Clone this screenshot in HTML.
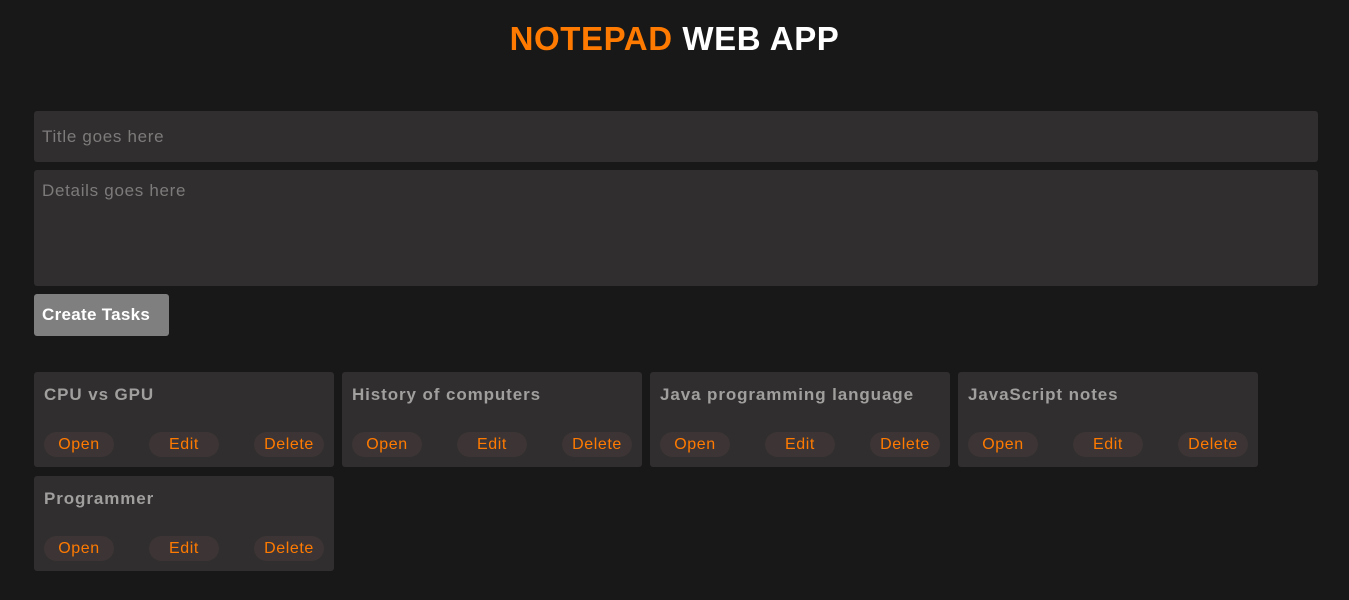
<!DOCTYPE html>
<html><head><style>
body{margin:0;background:#181818;font-family:"Liberation Sans",sans-serif;width:1349px;height:600px;overflow:hidden;position:relative}
h1{position:absolute;top:20px;left:0;width:100%;text-align:center;margin:0;font-size:33px;font-weight:bold;color:#fff;letter-spacing:0.6px}
h1 span{color:#ff7a00}
.in{position:absolute;left:34px;width:1284px;background:#302e2e;border-radius:3px;color:#7d7a7a;font-size:17px;box-sizing:border-box;padding-left:8px;letter-spacing:0.7px}
.btn{position:absolute;left:34px;top:294px;width:135px;height:42px;background:#7f7f7f;border-radius:3px;color:#fff;font-weight:bold;font-size:17px;line-height:42px;padding-left:8px;box-sizing:border-box;letter-spacing:0.3px}
.card{position:absolute;width:300px;height:95px;background:#302e2e;border-radius:3px}
.card b{position:absolute;left:10px;top:13px;color:#a19e9e;font-size:17px;letter-spacing:0.9px}
.p{position:absolute;top:60px;width:70px;height:25px;border-radius:13px;background:#3d3535;color:#ff7a00;font-size:16px;line-height:25px;text-align:center;letter-spacing:0.6px}
</style></head><body>
<h1><span>NOTEPAD</span> WEB APP</h1>
<div class="in" style="top:111px;height:51px;line-height:51px">Title goes here</div>
<div class="in" style="top:170px;height:116px;padding-top:11px">Details goes here</div>
<div class="btn">Create Tasks</div>
<div class="card" style="left:34px;top:372px"><b>CPU vs GPU</b><div class="p" style="left:10px">Open</div><div class="p" style="left:115px">Edit</div><div class="p" style="left:220px">Delete</div></div>
<div class="card" style="left:342px;top:372px"><b>History of computers</b><div class="p" style="left:10px">Open</div><div class="p" style="left:115px">Edit</div><div class="p" style="left:220px">Delete</div></div>
<div class="card" style="left:650px;top:372px"><b>Java programming language</b><div class="p" style="left:10px">Open</div><div class="p" style="left:115px">Edit</div><div class="p" style="left:220px">Delete</div></div>
<div class="card" style="left:958px;top:372px"><b>JavaScript notes</b><div class="p" style="left:10px">Open</div><div class="p" style="left:115px">Edit</div><div class="p" style="left:220px">Delete</div></div>
<div class="card" style="left:34px;top:476px"><b>Programmer</b><div class="p" style="left:10px">Open</div><div class="p" style="left:115px">Edit</div><div class="p" style="left:220px">Delete</div></div>
</body></html>
